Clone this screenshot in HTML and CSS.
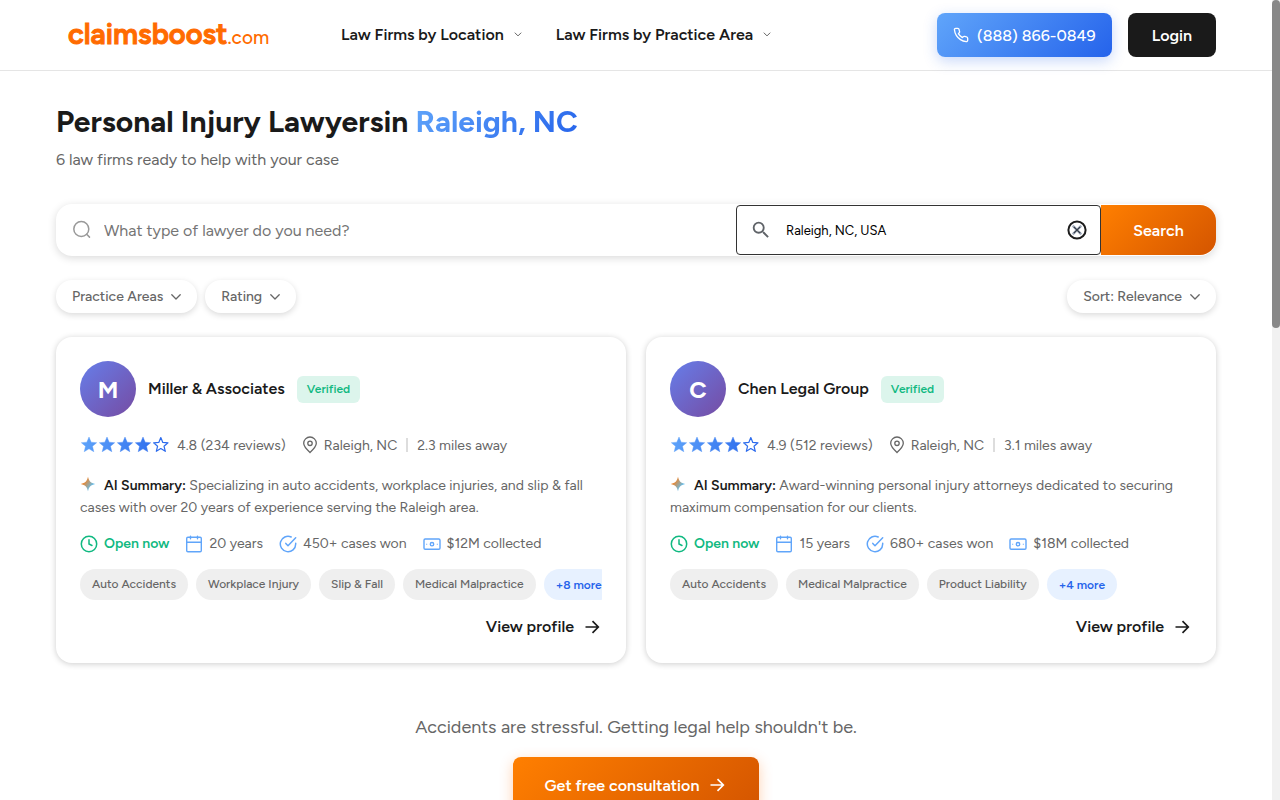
FILE: index.html
```html
<!DOCTYPE html>
<html lang="en">
<head>
<meta charset="utf-8">
<meta name="viewport" content="width=device-width, initial-scale=1">
<title>Personal Injury Lawyers in Raleigh, NC</title>
<link rel="stylesheet" href="styles.css">
</head>
<body>
<svg class="defs" aria-hidden="true">
  <defs>
    <linearGradient id="blue" gradientUnits="userSpaceOnUse" x1="0" y1="0" x2="90" y2="18"><stop offset="0" stop-color="#60a5fa"/><stop offset="1" stop-color="#2563eb"/></linearGradient>
    <linearGradient id="spark" x1="0.1" y1="0.2" x2="0.9" y2="0.8"><stop offset="0.15" stop-color="#f58220"/><stop offset="0.85" stop-color="#5bc0f8"/></linearGradient>
    <symbol id="chevron" viewBox="1 1 10 10"><path d="M1.800 3.800 6 8l4.200-4.200" fill="none" stroke="currentColor" stroke-width="1.300" stroke-linecap="round" stroke-linejoin="round"/></symbol>
    <symbol id="arrow" viewBox="-2 -2 20 20"><path d="M1.500 8h12.500M8.500 2.200 14.300 8l-5.800 5.800" fill="none" stroke="currentColor" stroke-width="1.700"/></symbol>
    <symbol id="stars" viewBox="0 0 90 18">
      <g fill="url(#blue)" stroke="url(#blue)" stroke-width=".4" stroke-linejoin="round">
        <path d="M9 1 11.200 6.200 16.700 6.700 12.500 10.300 13.800 15.700 9 12.800 4.200 15.700 5.500 10.300 1.300 6.700 6.800 6.200Z"/>
        <path d="M27 1 29.200 6.200 34.700 6.700 30.500 10.300 31.800 15.700 27 12.800 22.200 15.700 23.500 10.300 19.300 6.700 24.800 6.200Z"/>
        <path d="M45 1 47.200 6.200 52.700 6.700 48.500 10.300 49.800 15.700 45 12.800 40.200 15.700 41.500 10.300 37.300 6.700 42.800 6.200Z"/>
        <path d="M63 1 65.200 6.200 70.700 6.700 66.500 10.300 67.800 15.700 63 12.800 58.200 15.700 59.500 10.300 55.300 6.700 60.800 6.200Z"/>
        <path fill="none" stroke-width="1.200" d="M80.800 1.500 82.800 6.400 88 6.800 84 10.200 85.300 15.300 80.800 12.600 76.300 15.300 77.600 10.200 73.600 6.800 78.800 6.400Z"/>
      </g>
    </symbol>
    <symbol id="pin" viewBox="0 0 16 18"><g fill="none" stroke="currentColor" stroke-width="1.300"><path d="M8 16.500C4.500 13.300 1.700 10.500 1.700 7.300a6.300 6.300 0 0 1 12.600 0c0 3.200-2.800 6-6.300 9.200Z"/><circle cx="8" cy="7.300" r="2.200"/></g></symbol>
    <symbol id="sparkle" viewBox="0 0 16 16"><path fill="url(#spark)" d="M8 .8C9 5.200 10.800 7 15.200 8 10.800 9 9 10.800 8 15.200 7 10.800 5.200 9 .8 8 5.200 7 7 5.200 8 .8Z"/></symbol>
    <symbol id="clock" viewBox="0 0 18 18"><g fill="none" stroke="currentColor" stroke-width="1.500" stroke-linecap="round"><circle cx="9" cy="9" r="7.700"/><path d="M9 4.800V9l3 1.500"/></g></symbol>
    <symbol id="calendar" viewBox="0 0 18 18"><g fill="none" stroke="currentColor" stroke-width="1.400" stroke-linecap="round"><rect x="1.700" y="2.200" width="14.600" height="14.500" rx="1.200"/><path d="M1.700 7.200h14.600M5.500 1.200v2.500M12.500 1.200v2.500"/></g></symbol>
    <symbol id="check" viewBox="0 0 18 18"><g fill="none" stroke="currentColor" stroke-width="1.500" stroke-linecap="round" stroke-linejoin="round"><path d="M16.700 8.200v.8A7.700 7.700 0 1 1 12.200 2"/><path d="M16.700 2.800 9 10.700 6.800 8.400"/></g></symbol>
    <symbol id="cash" viewBox="0 0 18 18"><g fill="none" stroke="currentColor" stroke-width="1.400"><rect x="1" y="4" width="16" height="10.300" rx="1.200"/><circle cx="9" cy="9.200" r="1.700"/></g><path d="M3.200 8.700h1v1h-1zM13.800 8.700h1v1h-1z" fill="currentColor"/></symbol>
  </defs>
</svg>

<div class="viewport">
<div class="page">
  <header class="topbar">
    <a class="logo" href="#" aria-label="claimsboost.com"><span class="logo-name">claimsboost</span><span class="logo-tld">.com</span></a>
    <nav class="menu">
      <button type="button" class="menu-item">Law Firms by Location <svg class="caret"><use href="#chevron"/></svg></button>
      <button type="button" class="menu-item">Law Firms by Practice Area <svg class="caret"><use href="#chevron"/></svg></button>
    </nav>
    <div class="actions">
      <a class="phone" href="tel:8888660849"><svg class="phone-icon" viewBox="0 0 24 24"><path d="M22 16.920v3a2 2 0 0 1-2.180 2 19.790 19.790 0 0 1-8.630-3.070 19.500 19.500 0 0 1-6-6 19.790 19.790 0 0 1-3.070-8.670A2 2 0 0 1 4.110 2h3a2 2 0 0 1 2 1.720c.127.960.361 1.903.700 2.810a2 2 0 0 1-.45 2.110L8.090 9.910a16 16 0 0 0 6 6l1.270-1.270a2 2 0 0 1 2.110-.45c.907.339 1.850.573 2.810.700A2 2 0 0 1 22 16.920z"/></svg>(888) 866-0849</a>
      <a class="login" href="#">Login</a>
    </div>
  </header>

  <main class="content">
    <h1 class="title">Personal Injury Lawyersin <span class="place">Raleigh, NC</span></h1>
    <p class="subtitle">6 law firms ready to help with your case</p>

    <form class="search">
      <label class="search-type">
        <svg class="lens" viewBox="0 0 20 20"><circle cx="9.300" cy="9" r="7.500"/><path d="m14.700 14.300 2.800 2.800"/></svg>
        <input type="text" class="type-input" placeholder="What type of lawyer do you need?" aria-label="Type of lawyer">
      </label>
      <div class="search-place">
        <svg class="lens-solid" viewBox="0 0 24 24"><path d="M15.500 14h-.79l-.28-.27A6.471 6.471 0 0 0 16 9.500 6.500 6.500 0 1 0 9.500 16c1.610 0 3.090-.59 4.230-1.570l.27.280v.79l5 4.990L20.490 19l-4.990-5zm-6 0C7.010 14 5 11.990 5 9.500S7.010 5 9.500 5 14 7.010 14 9.500 11.990 14 9.500 14z"/></svg>
        <input type="text" class="place-input" value="Raleigh, NC, USA" aria-label="Location">
        <button type="button" class="clear" aria-label="Clear location"><svg viewBox="0 0 20 20"><circle cx="10" cy="10" r="8.600" fill="none" stroke="#1c1c1c" stroke-width="2"/><path d="m5.700 5.700 8.600 8.600M14.300 5.700l-8.600 8.600" stroke="#a3adbd" stroke-width="2.400"/><path d="m6.800 6.800 6.400 6.400M13.200 6.800l-6.400 6.400" stroke="#333a45" stroke-width="1.200"/></svg></button>
      </div>
      <button type="button" class="search-button">Search</button>
    </form>

    <div class="filters">
      <button type="button" class="pill">Practice Areas <svg class="pill-caret"><use href="#chevron"/></svg></button>
      <button type="button" class="pill">Rating <svg class="pill-caret"><use href="#chevron"/></svg></button>
      <button type="button" class="pill pill-end">Sort: Relevance <svg class="pill-caret"><use href="#chevron"/></svg></button>
    </div>

    <section class="firms" aria-label="Law firms">
      <article class="card">
        <div class="card-head"><span class="avatar">M</span><h2 class="firm">Miller &amp; Associates</h2><span class="verified">Verified</span></div>
        <div class="rating"><svg class="stars" role="img" aria-label="4 of 5 stars"><use href="#stars"/></svg><span>4.8 (234 reviews)</span><svg class="pin"><use href="#pin"/></svg><span>Raleigh, NC</span><span class="divider"></span><span>2.3 miles away</span></div>
        <p class="summary"><svg class="sparkle"><use href="#sparkle"/></svg><strong>AI Summary:</strong> Specializing in auto accidents, workplace injuries, and slip &amp; fall cases with over 20 years of experience serving the Raleigh area.</p>
        <ul class="stats">
          <li class="stat open"><svg><use href="#clock"/></svg>Open now</li>
          <li class="stat"><svg><use href="#calendar"/></svg>20 years</li>
          <li class="stat"><svg><use href="#check"/></svg>450+ cases won</li>
          <li class="stat"><svg><use href="#cash"/></svg>$12M collected</li>
        </ul>
        <div class="tags"><span class="tag">Auto Accidents</span><span class="tag">Workplace Injury</span><span class="tag">Slip &amp; Fall</span><span class="tag">Medical Malpractice</span><button type="button" class="tag more">+8 more</button></div>
        <a class="profile" href="#">View profile <svg><use href="#arrow"/></svg></a>
      </article>
      <article class="card">
        <div class="card-head"><span class="avatar">C</span><h2 class="firm">Chen Legal Group</h2><span class="verified">Verified</span></div>
        <div class="rating"><svg class="stars" role="img" aria-label="4 of 5 stars"><use href="#stars"/></svg><span>4.9 (512 reviews)</span><svg class="pin"><use href="#pin"/></svg><span>Raleigh, NC</span><span class="divider"></span><span>3.1 miles away</span></div>
        <p class="summary"><svg class="sparkle"><use href="#sparkle"/></svg><strong>AI Summary:</strong> Award-winning personal injury attorneys dedicated to securing maximum compensation for our clients.</p>
        <ul class="stats">
          <li class="stat open"><svg><use href="#clock"/></svg>Open now</li>
          <li class="stat"><svg><use href="#calendar"/></svg>15 years</li>
          <li class="stat"><svg><use href="#check"/></svg>680+ cases won</li>
          <li class="stat"><svg><use href="#cash"/></svg>$18M collected</li>
        </ul>
        <div class="tags"><span class="tag">Auto Accidents</span><span class="tag">Medical Malpractice</span><span class="tag">Product Liability</span><button type="button" class="tag more">+4 more</button></div>
        <a class="profile" href="#">View profile <svg><use href="#arrow"/></svg></a>
      </article>
    </section>

    <section class="cta">
      <p class="cta-text">Accidents are stressful. Getting legal help shouldn't be.</p>
      <a class="cta-button" href="#">Get free consultation <svg><use href="#arrow"/></svg></a>
    </section>
  </main>
</div>
<div class="scrollbar" aria-hidden="true"><div class="thumb"></div></div>
</div>
</body>
</html>
```

FILE: styles.css
```css
* { box-sizing: border-box; }
body { margin: 0; background: #fff; color: #1a1a1a; font-family: Figtree, Lato, sans-serif; font-size: 16px; }
button, input { font: inherit; color: inherit; border: 0; background: none; padding: 0; margin: 0; }
button { cursor: pointer; }
a { color: inherit; text-decoration: none; }
svg { flex: none; display: block; }
.defs { position: absolute; width: 0; height: 0; }

.viewport { display: flex; height: 100vh; overflow: hidden; }
.page { flex: 1; min-width: 0; }
.scrollbar { width: 8px; background: #f1f1f1; }
.thumb { height: 41%; background: #888; border-radius: 4px; }

.topbar { display: flex; align-items: center; height: 71px; padding: 0 56px 0 68px; border-bottom: 1px solid #e5e5e5; }
.logo { display: flex; align-items: baseline; width: 201px; padding-top: 2px; color: #ff6b00; line-height: 32px; }
.logo-name { font-size: 29px; font-weight: 600; -webkit-text-stroke: 1px #ff6b00; }
.logo-tld { font-size: 19px; font-weight: 500; }
.menu { display: flex; gap: 32px; margin-left: 72px; }
.menu-item { display: flex; align-items: center; gap: 8px; padding-bottom: 2px; font-weight: 600; white-space: nowrap; }
.caret { width: 12px; height: 7px; color: #555; }
.actions { display: flex; gap: 16px; margin-left: auto; }
.phone, .login { display: flex; align-items: center; height: 44px; border-radius: 8px; color: #fff; white-space: nowrap; }
.phone { gap: 8px; padding: 0 16px; font-weight: 500; background: linear-gradient(135deg, #60a5fa, #2563eb); box-shadow: 0 4px 14px rgba(37, 99, 235, .25); }
.phone-icon { width: 16px; height: 16px; fill: none; stroke: #fff; stroke-width: 2; stroke-linejoin: round; }
.login { padding: 0 24px; font-weight: 600; background: #1a1a1a; }

.content { padding: 31px 56px 0; }
.title { margin: 0; font-size: 30px; line-height: 40px; font-weight: 700; }
.place { background: linear-gradient(135deg, #60a5fa, #2563eb); -webkit-background-clip: text; background-clip: text; color: transparent; }
.subtitle { margin: 6px 0 0; line-height: 24px; color: #666; }

.search { display: flex; align-items: center; height: 52px; margin-top: 32px; border-radius: 16px; background: #fff; box-shadow: 0 2px 8px rgba(0, 0, 0, .15); }
.search-type { flex: 1; display: flex; align-items: center; gap: 12px; padding-left: 16px; min-width: 0; }
.lens { width: 20px; height: 20px; fill: none; stroke: #999; stroke-width: 1.5; stroke-linecap: round; }
.type-input { flex: 1; min-width: 0; height: 48px; outline: 0; }
.type-input::placeholder { color: #757575; }
.search-place { display: flex; align-items: center; width: 365px; height: 50px; padding: 0 13px; border: 1px solid #333; border-radius: 4px; }
.lens-solid { width: 22px; height: 22px; fill: #5f6368; }
.place-input { flex: 1; min-width: 0; margin-left: 14px; font-size: 13px; color: #000; outline: 0; }
.clear svg { width: 20px; height: 20px; }
.search-button { width: 115px; height: 50px; color: #fff; font-weight: 600; border-radius: 0 16px 16px 0; background: linear-gradient(135deg, #ff7f00, #d45500); }

.filters { display: flex; gap: 8px; margin-top: 24px; }
.pill { display: flex; align-items: center; gap: 8px; height: 33px; padding: 0 16px; border-radius: 16px; font-size: 14px; font-weight: 500; color: #666; box-shadow: 0 2px 6px rgba(0, 0, 0, .15); white-space: nowrap; }
.pill-end { margin-left: auto; }
.pill-caret { width: 10px; height: 10px; }

.firms { display: grid; grid-template-columns: 1fr 1fr; gap: 20px; margin-top: 24px; }
.card { display: flex; flex-direction: column; min-width: 0; padding: 24px; border-radius: 16px; box-shadow: 0 1px 6px rgba(0, 0, 0, .2); }
.card-head { display: flex; align-items: center; gap: 12px; }
.avatar { display: flex; align-items: center; justify-content: center; width: 56px; height: 56px; border-radius: 50%; color: #fff; font-size: 24px; font-weight: 700; background: linear-gradient(135deg, #667eea, #764ba2); }
.firm { margin: 0; font-size: 16px; line-height: 24px; font-weight: 600; }
.verified { padding: 0 10px; line-height: 27px; border-radius: 6px; background: #dcf5ec; color: #10b981; font-size: 12px; font-weight: 600; }
.rating { display: flex; align-items: center; height: 24px; margin-top: 16px; font-size: 14px; color: #666; white-space: nowrap; }
.stars { width: 90px; height: 18px; margin-right: 7px; }
.pin { width: 16px; height: 18px; margin: 0 6px 0 16px; }
.divider { width: 2px; height: 14px; margin: 0 9px; background: #ddd; }
.summary { margin: 18px 0 0; font-size: 14px; line-height: 22px; color: #666; }
.summary strong { color: #1a1a1a; font-weight: 600; }
.sparkle { display: inline-block; width: 16px; height: 16px; margin-right: 8px; vertical-align: -2px; }
.stats { display: flex; gap: 16px; margin: 15px 0 0; padding: 0; list-style: none; font-size: 14px; line-height: 20px; color: #666; }
.stat { display: flex; align-items: center; gap: 6px; white-space: nowrap; }
.stat svg { width: 18px; height: 18px; color: #60a5fa; }
.open, .stat.open svg { color: #10b981; font-weight: 600; }
.tags { display: flex; gap: 8px; margin-top: 15px; overflow: hidden; }
.tag { flex: none; height: 31px; padding: 0 12px; border-radius: 16px; line-height: 31px; font-size: 12px; font-weight: 500; color: #666; background: #efefef; white-space: nowrap; }
.more { line-height: 32px; font-weight: 600; color: #2563eb; background: #e7f1ff; }
.profile { display: flex; align-items: center; align-self: flex-end; gap: 8px; margin-top: 15px; line-height: 24px; font-weight: 600; }
.profile svg, .cta-button svg { width: 20px; height: 20px; }

.cta { display: flex; flex-direction: column; align-items: center; margin-top: 50px; }
.cta-text { margin: 0; font-size: 18px; line-height: 28px; color: #666; }
.cta-button { display: flex; align-items: center; gap: 8px; height: 56px; margin-top: 16px; padding: 0 32px; border-radius: 8px; color: #fff; font-weight: 600; background: linear-gradient(135deg, #ff7f00, #d45500); box-shadow: 0 4px 14px rgba(255, 107, 0, .3); }
```
